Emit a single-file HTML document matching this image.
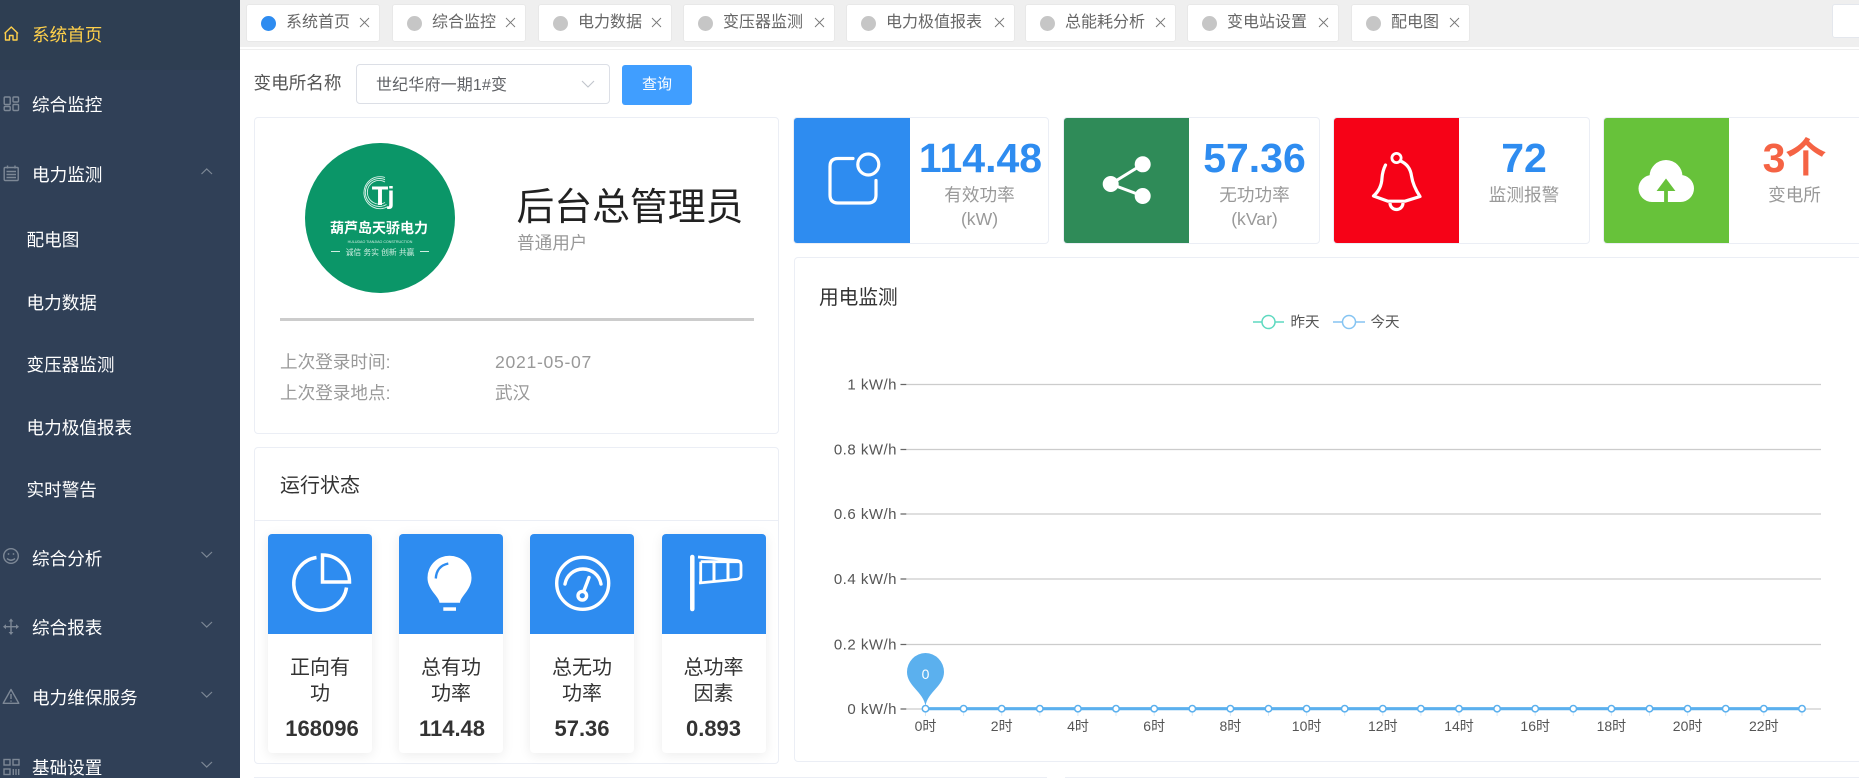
<!DOCTYPE html>
<html lang="zh">
<head>
<meta charset="utf-8">
<title>系统首页</title>
<style>
html,body{margin:0;padding:0;width:1859px;height:778px;overflow:hidden;background:#fff}
body{position:relative;font-family:"Liberation Sans","Noto Sans CJK SC",sans-serif;color:#333}
.a{position:absolute;box-sizing:border-box}
.t{position:absolute;white-space:nowrap}
.c{position:absolute;text-align:center;white-space:nowrap}
.card{position:absolute;box-sizing:border-box;background:#fff;border:1px solid #ebeef5;border-radius:4px}
.tab{position:absolute;top:4px;height:38px;background:#fff;border-radius:3px;border:1px solid #e8e8e8;box-sizing:border-box}
.tab i{position:absolute;left:14px;top:11px;width:15px;height:15px;border-radius:50%;background:#c6c6c6}
.tab span{position:absolute;left:39px;top:0;line-height:35px;font-size:16px;color:#666;white-space:nowrap}
.tab svg{position:absolute;right:9px;top:12px}
.m{position:absolute;left:32px;font-size:17.6px;line-height:30px;color:#fff;white-space:nowrap}
.s{left:26.5px}
.box{position:absolute;top:117px;height:127px}
.val{font-size:41px;font-weight:bold;line-height:50px;color:#2e8cf0}
.lab{font-size:17.6px;line-height:24px;color:#999}
.ic{position:absolute;background:#fff;border-radius:4px;box-shadow:0 2px 12px rgba(0,0,0,.08);top:534px;height:219px;width:104px}
.ic .top{position:absolute;left:0;top:0;width:100%;height:100px;background:#2e8cf0;border-radius:4px 4px 0 0}
.ic .tx{position:absolute;left:0;width:100%;text-align:center;font-size:20px;line-height:26px;color:#333;top:121px}
.ic .nm{position:absolute;left:0;width:100%;text-align:center;font-size:22px;line-height:30px;font-weight:bold;color:#333;top:180px}
</style>
</head>
<body>

<!-- sidebar -->
<div class="a" style="left:0;top:0;width:240px;height:778px;background:#304057"></div>
<div class="a" style="left:0;top:0;width:240px;height:70px;background:#2e3e52"></div>
<div class="m" style="top:20px;color:#ffd04b">系统首页</div>
<div class="m" style="top:90px">综合监控</div>
<div class="m" style="top:160px">电力监测</div>
<div class="m s" style="top:225px">配电图</div>
<div class="m s" style="top:288px">电力数据</div>
<div class="m s" style="top:350px">变压器监测</div>
<div class="m s" style="top:413px">电力极值报表</div>
<div class="m s" style="top:475px">实时警告</div>
<div class="m" style="top:544px">综合分析</div>
<div class="m" style="top:613px">综合报表</div>
<div class="m" style="top:683px">电力维保服务</div>
<div class="m" style="top:753px">基础设置</div>

<svg class="a" style="left:0;top:0" width="240" height="778" viewBox="0 0 240 778" fill="none">
  <path d="M4.5 33.5 L11.3 27 L18 33.5 M5.5 32.5 V40 H9.5 V35.5 H13 V40 H17 V32.5" stroke="#ffd04b" stroke-width="1.4" stroke-linejoin="round"/>
  <g stroke="#7d8896" stroke-width="1.4">
    <rect x="4.2" y="97" width="6" height="7.5" rx="1"/><rect x="13" y="97" width="5.5" height="5" rx="1"/>
    <rect x="4.2" y="106.5" width="6" height="4" rx="1"/><rect x="13" y="104.5" width="5.5" height="6" rx="1"/>
    <rect x="4.2" y="167.5" width="14" height="13" rx="1"/>
    <path d="M7.5 165.5v3M15 165.5v3M6.5 171.5h9.5M6.5 174.5h9.5M6.5 177.5h9.5"/>
    <circle cx="11" cy="556" r="7.3"/>
    <path d="M7 558.5q4 3.5 8 0"/>
    <path d="M11 620v13.5M4.5 626.7h13"/>
    <path d="M11 689.5 L18.8 703.3 H3.2 Z" stroke-linejoin="round"/>
    <path d="M11 694v5M11 700.5v1.3"/>
    <rect x="4" y="759.5" width="6" height="5.5"/><rect x="13" y="759.5" width="6" height="5.5"/>
    <rect x="4" y="769" width="6" height="5.5"/><path d="M13.3 769v6M16 769v6M18.7 769v6"/>
  </g>
  <path d="M11 618.5l-2.4 3h4.8zM11 635l-2.4-3h4.8zM3 626.7l3-2.4v4.8zM19 626.7l-3-2.4v4.8z" fill="#7d8896"/>
  <circle cx="8.5" cy="554" r=".9" fill="#7d8896"/><circle cx="13.5" cy="554" r=".9" fill="#7d8896"/>
  <g stroke="#7d8896" stroke-width="1.2">
    <path d="M201.5 174 L206.7 169 L212 174"/>
    <path d="M201.5 552 L206.7 557 L212 552"/>
    <path d="M201.5 622 L206.7 627 L212 622"/>
    <path d="M201.5 692 L206.7 697 L212 692"/>
    <path d="M201.5 762 L206.7 767 L212 762"/>
  </g>
</svg>

<!-- tab bar -->
<div class="a" style="left:240px;top:0;width:1619px;height:47px;background:#efefef"></div>
<div class="a" style="left:240px;top:49px;width:1619px;height:1px;background:#eeeeee"></div>

<div class="tab" style="left:246px;width:134px"><i style="background:#2e8cf0"></i><span>系统首页</span><svg width="11" height="11" stroke="#777" stroke-width=".9"><path d="M1 1l9 9M10 1l-9 9"/></svg></div>
<div class="tab" style="left:392px;width:134px"><i></i><span>综合监控</span><svg width="11" height="11" stroke="#777" stroke-width=".9"><path d="M1 1l9 9M10 1l-9 9"/></svg></div>
<div class="tab" style="left:538px;width:134px"><i></i><span>电力数据</span><svg width="11" height="11" stroke="#777" stroke-width=".9"><path d="M1 1l9 9M10 1l-9 9"/></svg></div>
<div class="tab" style="left:683px;width:152px"><i></i><span>变压器监测</span><svg width="11" height="11" stroke="#777" stroke-width=".9"><path d="M1 1l9 9M10 1l-9 9"/></svg></div>
<div class="tab" style="left:846px;width:169px"><i></i><span>电力极值报表</span><svg width="11" height="11" stroke="#777" stroke-width=".9"><path d="M1 1l9 9M10 1l-9 9"/></svg></div>
<div class="tab" style="left:1025px;width:151px"><i></i><span>总能耗分析</span><svg width="11" height="11" stroke="#777" stroke-width=".9"><path d="M1 1l9 9M10 1l-9 9"/></svg></div>
<div class="tab" style="left:1187px;width:152px"><i></i><span>变电站设置</span><svg width="11" height="11" stroke="#777" stroke-width=".9"><path d="M1 1l9 9M10 1l-9 9"/></svg></div>
<div class="tab" style="left:1351px;width:119px"><i></i><span>配电图</span><svg width="11" height="11" stroke="#777" stroke-width=".9"><path d="M1 1l9 9M10 1l-9 9"/></svg></div>
<div class="a" style="left:1832px;top:4px;width:40px;height:34px;background:#fff;border:1px solid #e4e7ed;border-radius:3px"></div>

<!-- query form -->
<div class="t" style="left:253.5px;top:68px;font-size:17.6px;line-height:30px;color:#555">变电所名称</div>
<div class="a" style="left:356px;top:64px;width:254px;height:40px;border:1px solid #dcdfe6;border-radius:4px;background:#fff"></div>
<div class="t" style="left:376px;top:72px;font-size:16px;line-height:28px;color:#606266;letter-spacing:.15px">世纪华府一期1#变</div>
<svg class="a" style="left:580px;top:78px" width="16" height="12" fill="none" stroke="#c0c4cc" stroke-width="1.1"><path d="M2 3 L8 9 L14 3"/></svg>
<div class="c" style="left:622px;top:65px;width:70px;height:40px;line-height:40px;background:#409eff;color:#fff;font-size:15px;border-radius:3px">查询</div>

<!-- profile -->
<div class="card" style="left:254px;top:117px;width:525px;height:317px"></div>
<svg class="a" style="left:305px;top:143px" width="150" height="150" viewBox="305 143 150 150">
  <circle cx="380" cy="218" r="75" fill="#0b9668"/>
  <g fill="none" stroke="#dff3ec" stroke-width=".9">
    <path d="M385 177.5 A16 16 0 1 0 388 206.5"/>
    <path d="M385 179.7 A14 14 0 1 0 386.5 204.5"/>
    <path d="M385 182 A11.8 11.8 0 1 0 385 202.5"/>
  </g>
  <text x="380" y="205" text-anchor="middle" font-size="27" font-weight="bold" fill="#fff" font-family="Liberation Sans,sans-serif">T</text>
  <text x="391" y="204" text-anchor="middle" font-size="25" font-weight="bold" fill="#fff" font-family="Liberation Sans,sans-serif">j</text>
  <text x="379" y="233" text-anchor="middle" font-size="14" font-weight="bold" fill="#fff" font-family="Liberation Sans,Noto Sans CJK SC,sans-serif">葫芦岛天骄电力</text>
  <text x="380" y="243" text-anchor="middle" font-size="3.6" fill="#d5efe6" font-family="Liberation Sans,sans-serif">HULUDAO TIANJIAO CONSTRUCTION</text>
  <text x="380" y="255" text-anchor="middle" font-size="7.8" fill="#cfeee2" font-family="Liberation Sans,Noto Sans CJK SC,sans-serif">诚信 务实 创新 共赢</text>
  <path d="M331 251.5h9M420 251.5h9" stroke="#cfeee2" stroke-width="1"/>
</svg>
<div class="t" style="left:516.5px;top:183px;font-size:37.8px;line-height:50px;color:#222">后台总管理员</div>
<div class="t" style="left:517px;top:231px;font-size:17.6px;line-height:24px;color:#999">普通用户</div>
<div class="a" style="left:280px;top:318px;width:474px;height:3px;background:#cccccc"></div>
<div class="t" style="left:280px;top:350px;font-size:17.6px;line-height:24px;color:#999">上次登录时间:</div>
<div class="t" style="left:495px;top:350px;font-size:17.6px;line-height:24px;color:#999;letter-spacing:.7px">2021-05-07</div>
<div class="t" style="left:280px;top:381px;font-size:17.6px;line-height:24px;color:#999">上次登录地点:</div>
<div class="t" style="left:495px;top:381px;font-size:17.6px;line-height:24px;color:#999">武汉</div>

<!-- stat cards -->
<div class="card box" style="left:793px;width:256px"></div>
<div class="a" style="left:794px;top:118px;width:116px;height:125px;background:#2e8cf0;border-radius:3px 0 0 3px"></div>
<div class="c val" style="left:911px;top:133px;width:139px">114.48</div>
<div class="c lab" style="left:910px;top:183px;width:139px">有效功率</div>
<div class="c lab" style="left:910px;top:207px;width:139px">(kW)</div>

<div class="card box" style="left:1063px;width:257px"></div>
<div class="a" style="left:1064px;top:118px;width:125px;height:125px;background:#2f8b58;border-radius:3px 0 0 3px"></div>
<div class="c val" style="left:1189px;top:133px;width:131px">57.36</div>
<div class="c lab" style="left:1189px;top:183px;width:131px">无功功率</div>
<div class="c lab" style="left:1189px;top:207px;width:131px">(kVar)</div>

<div class="card box" style="left:1333px;width:257px"></div>
<div class="a" style="left:1334px;top:118px;width:125px;height:125px;background:#f60217;border-radius:3px 0 0 3px"></div>
<div class="c val" style="left:1459px;top:133px;width:130px">72</div>
<div class="c lab" style="left:1459px;top:183px;width:130px">监测报警</div>

<div class="card box" style="left:1603px;width:270px"></div>
<div class="a" style="left:1604px;top:118px;width:125px;height:125px;background:#67c23a;border-radius:3px 0 0 3px"></div>
<div class="c val" style="left:1730px;top:133px;width:129px;color:#f56344">3个</div>
<div class="c lab" style="left:1730px;top:183px;width:129px">变电所</div>

<svg class="a" style="left:0;top:0;pointer-events:none" width="1859" height="778" viewBox="0 0 1859 778" fill="none">
  <!-- rounded square with circle -->
  <path d="M853 158.5 H838 Q830 158.5 830 166.5 V195 Q830 203 838 203 H868 Q876 203 876 195 V180.5" stroke="#fff" stroke-width="3.2" stroke-linecap="round"/>
  <circle cx="868.3" cy="164.5" r="10.5" stroke="#fff" stroke-width="3.2"/>
  <!-- share -->
  <path d="M1142.7 164.3 L1110.7 184 L1142.7 196" stroke="#fff" stroke-width="3"/>
  <circle cx="1142.7" cy="164.3" r="8" fill="#fff"/><circle cx="1110.7" cy="184" r="8" fill="#fff"/><circle cx="1142.7" cy="196" r="8" fill="#fff"/>
  <!-- bell -->
  <circle cx="1396.5" cy="158" r="4.6" stroke="#fff" stroke-width="2.8"/>
  <path d="M1385.5 165 Q1382.5 171 1382 178 Q1381.5 189 1373.5 196 L1388 201.2 H1405 L1420 196.5 Q1413 186 1411.5 176 Q1410 165 1400.5 161" stroke="#fff" stroke-width="3.2" stroke-linecap="round" stroke-linejoin="round"/>
  <path d="M1390 203 A6.5 6.5 0 0 0 1403 203" stroke="#fff" stroke-width="3.2"/>
  <!-- cloud -->
  <g fill="#fff">
    <circle cx="1666" cy="176.5" r="16.5"/><circle cx="1652" cy="188.5" r="13.5"/><circle cx="1680.5" cy="188.5" r="13.5"/>
    <rect x="1652" y="180" width="29" height="22"/>
  </g>
  <path d="M1666 178.5 L1675.4 191 H1667.9 V202 H1664.1 V191 H1656.6 Z" fill="#67c23a"/>
</svg>

<!-- chart card -->
<div class="card" style="left:794px;top:257px;width:1080px;height:505px"></div>
<div class="t" style="left:819px;top:283px;font-size:19.7px;line-height:30px;color:#333">用电监测</div>
<svg class="a" style="left:794px;top:258px" width="1065" height="504" viewBox="794 258 1065 504" font-family="Liberation Sans,Noto Sans CJK SC,sans-serif">
  <!-- legend -->
  <path d="M1253 322h31" stroke="#5ed9c0" stroke-width="1.5"/><circle cx="1268.5" cy="322" r="6.5" fill="#fff" stroke="#5ed9c0" stroke-width="1.5"/>
  <text x="1290.5" y="327" font-size="14.5" fill="#555">昨天</text>
  <path d="M1333 322h32" stroke="#85c4f2" stroke-width="1.5"/><circle cx="1349" cy="322" r="6.5" fill="#fff" stroke="#85c4f2" stroke-width="1.5"/>
  <text x="1370.5" y="327" font-size="14.5" fill="#555">今天</text>
  <!-- grid -->
  <g stroke="#cccccc" stroke-width="1.3">
    <path d="M907 384.5H1821M907 449.5H1821M907 514H1821M907 579H1821M907 644.5H1821M907 709H1821"/>
  </g>
  <g stroke="#666" stroke-width="1.2">
    <path d="M900.5 384.5h6M900.5 449.5h6M900.5 514h6M900.5 579h6M900.5 644.5h6M900.5 709h6"/>
  </g>
  <g font-size="15" fill="#555" text-anchor="end" letter-spacing=".5">
    <text x="897" y="389.5">1 kW/h</text>
    <text x="897" y="454.5">0.8 kW/h</text>
    <text x="897" y="519">0.6 kW/h</text>
    <text x="897" y="584">0.4 kW/h</text>
    <text x="897" y="649.5">0.2 kW/h</text>
    <text x="897" y="714">0 kW/h</text>
  </g>
  <g font-size="14" fill="#555" text-anchor="middle">
    <text x="925.5" y="731">0时</text><text x="1001.7" y="731">2时</text><text x="1078" y="731">4时</text><text x="1154.2" y="731">6时</text>
    <text x="1230.4" y="731">8时</text><text x="1306.6" y="731">10时</text><text x="1382.8" y="731">12时</text><text x="1459" y="731">14时</text>
    <text x="1535.2" y="731">16时</text><text x="1611.4" y="731">18时</text><text x="1687.6" y="731">20时</text><text x="1763.8" y="731">22时</text>
  </g>
  <g stroke="#d8e9f5" stroke-width="1">
    <path d="M925.5 711v5M963.6 711v5M1001.7 711v5M1039.8 711v5M1077.9 711v5M1116 711v5M1154.2 711v5M1192.3 711v5M1230.4 711v5M1268.5 711v5M1306.6 711v5M1344.7 711v5M1382.8 711v5M1420.9 711v5M1459 711v5M1497.1 711v5M1535.2 711v5M1573.3 711v5M1611.4 711v5M1649.5 711v5M1687.6 711v5M1725.7 711v5M1763.8 711v5M1802 711v5"/>
  </g>
  <path d="M925.5 708.7H1802.2" stroke="#5bb0ee" stroke-width="3.2"/>
  <g fill="#fff" stroke="#5bb0ee" stroke-width="1.5">
    <circle cx="925.5" cy="708.7" r="3.2"/><circle cx="963.6" cy="708.7" r="3.2"/><circle cx="1001.7" cy="708.7" r="3.2"/><circle cx="1039.8" cy="708.7" r="3.2"/>
    <circle cx="1077.9" cy="708.7" r="3.2"/><circle cx="1116" cy="708.7" r="3.2"/><circle cx="1154.2" cy="708.7" r="3.2"/><circle cx="1192.3" cy="708.7" r="3.2"/>
    <circle cx="1230.4" cy="708.7" r="3.2"/><circle cx="1268.5" cy="708.7" r="3.2"/><circle cx="1306.6" cy="708.7" r="3.2"/><circle cx="1344.7" cy="708.7" r="3.2"/>
    <circle cx="1382.8" cy="708.7" r="3.2"/><circle cx="1420.9" cy="708.7" r="3.2"/><circle cx="1459" cy="708.7" r="3.2"/><circle cx="1497.1" cy="708.7" r="3.2"/>
    <circle cx="1535.2" cy="708.7" r="3.2"/><circle cx="1573.3" cy="708.7" r="3.2"/><circle cx="1611.4" cy="708.7" r="3.2"/><circle cx="1649.5" cy="708.7" r="3.2"/>
    <circle cx="1687.6" cy="708.7" r="3.2"/><circle cx="1725.7" cy="708.7" r="3.2"/><circle cx="1763.8" cy="708.7" r="3.2"/><circle cx="1802" cy="708.7" r="3.2"/>
  </g>
  <!-- pin -->
  <path d="M925.5 706 C923.5 692 907 686 907 672 A18.5 19 0 0 1 944 672 C944 686 927.5 692 925.5 706 Z" fill="#5bb0ee"/>
  <text x="925.5" y="679" font-size="14" fill="#fff" text-anchor="middle">0</text>
</svg>

<!-- run status -->
<div class="card" style="left:254px;top:447px;width:525px;height:317px"></div>
<div class="t" style="left:280px;top:471px;font-size:20px;line-height:30px;color:#333">运行状态</div>
<div class="a" style="left:255px;top:520px;width:523px;height:1px;background:#ebeef5"></div>

<div class="ic" style="left:268px"><div class="top"></div><div class="tx">正向有<br>功</div><div class="nm" style="left:2px">168096</div></div>
<div class="ic" style="left:399px"><div class="top"></div><div class="tx">总有功<br>功率</div><div class="nm" style="left:1px">114.48</div></div>
<div class="ic" style="left:530px"><div class="top"></div><div class="tx">总无功<br>功率</div><div class="nm">57.36</div></div>
<div class="ic" style="left:661.5px"><div class="top"></div><div class="tx">总功率<br>因素</div><div class="nm">0.893</div></div>

<svg class="a" style="left:0;top:0;pointer-events:none" width="1859" height="778" viewBox="0 0 1859 778" fill="none">
  <!-- pie -->
  <path d="M316.5 557.5 A26.5 26.5 0 1 0 346.5 587.5" stroke="#fff" stroke-width="3.5"/>
  <path d="M322.5 555 V582 H349.5 A27 27 0 0 0 322.5 555 Z" stroke="#fff" stroke-width="3.5"/>
  <!-- bulb -->
  <path d="M439.5 602.7 H460 C460.5 596 471.5 590 471.5 577.7 A22 22 0 0 0 427.5 577.7 C427.5 590 439 596 439.5 602.7 Z" fill="#fff"/>
  <rect x="443.3" y="607.3" width="12.7" height="3.5" fill="#fff"/>
  <path d="M435.8 578.5 Q436.5 566 448.3 563.5" stroke="#2e8cf0" stroke-width="2.4"/>
  <!-- gauge -->
  <circle cx="582.7" cy="583.3" r="26" stroke="#fff" stroke-width="3.4"/>
  <path d="M565 584 A18.3 18.3 0 0 1 601 584" stroke="#fff" stroke-width="3.4" stroke-linecap="round"/>
  <path d="M583.5 592 L589 577.5" stroke="#fff" stroke-width="3.4" stroke-linecap="round"/>
  <circle cx="582.3" cy="595.7" r="4.3" fill="#2e8cf0" stroke="#fff" stroke-width="3.4"/>
  <!-- windsock -->
  <path d="M692.3 557 V609" stroke="#fff" stroke-width="4.5" stroke-linecap="round"/>
  <path d="M698 557 L737 560.5 Q741 561 741 565 V575.5 Q741 578.5 737 579.3 L699 583 M700.7 561.7 H741 M700.7 561.7 V582" stroke="#fff" stroke-width="2.8"/>
  <path d="M714 561 V580.5M728 562 V579.5" stroke="#fff" stroke-width="3"/>
</svg>

<!-- bottom cards, cut off -->
<div class="a" style="left:254px;top:777px;width:793px;height:1px;background:#ebeef5"></div>
<div class="a" style="left:1065px;top:777px;width:794px;height:1px;background:#ebeef5"></div>

</body>
</html>
